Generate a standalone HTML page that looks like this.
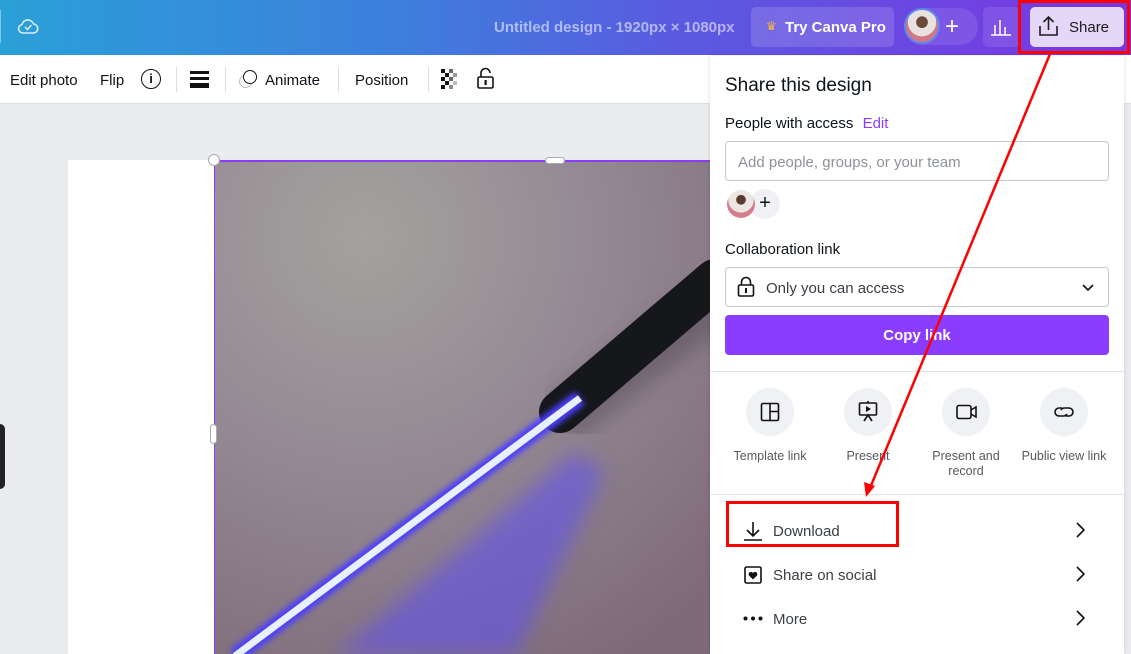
<!DOCTYPE html>
<html><head><meta charset="utf-8"><style>
*{box-sizing:border-box;margin:0;padding:0}
body{width:1131px;height:654px;overflow:hidden;position:relative;font-family:"Liberation Sans",sans-serif;background:#ebecf0;color:#0e1318}
.top{position:absolute;left:0;top:0;width:1131px;height:55px;background:linear-gradient(90deg,#2aa0d8 0%,#3d7fdc 35%,#5a5ae0 60%,#7b35e3 100%)}
.tb{position:absolute;left:0;top:55px;width:1131px;height:49px;background:#fff;border-bottom:1px solid #dcdde2}
.tb span{position:absolute;top:17px;font-size:15px;color:#0e1318}
.sep{position:absolute;top:12px;width:1px;height:25px;background:#dcdde2}
.abs{position:absolute}
.panel{position:absolute;left:710px;top:56px;width:414px;height:598px;background:#fff;box-shadow:0 0 4px rgba(0,0,0,.15)}
.panel .t{position:absolute;font-size:15px;color:#0e1318}
.circ{position:absolute;width:48px;height:48px;border-radius:50%;background:#f0f1f4}
.lab{position:absolute;font-size:12.5px;color:#555a60;text-align:center;width:100px;line-height:15px}
.row{position:absolute;left:0;width:414px;height:44px}
.row span{position:absolute;left:63px;top:14px;font-size:15px;color:#3a3f45}
.chev{position:absolute;left:365px;top:13px}
</style></head><body>
<div class="top">
 <div class="abs" style="left:0;top:10px;width:1px;height:33px;background:rgba(255,255,255,.4)"></div>
 <svg class="abs" style="left:17px;top:16px" width="22" height="20" viewBox="0 0 22 20"><path d="M6 17h10a4.5 4.5 0 0 0 .5-9A6 6 0 0 0 5 8.5 4.3 4.3 0 0 0 6 17z" fill="none" stroke="#d8ecf8" stroke-width="1.6"/><path d="M8 11l2.5 2.5L14.5 9" fill="none" stroke="#d8ecf8" stroke-width="1.6"/></svg>
 <div class="abs" style="left:494px;top:19px;font-size:15px;font-weight:bold;color:rgba(255,255,255,.55)">Untitled design - 1920px × 1080px</div>
 <div class="abs" style="left:751px;top:7px;width:143px;height:40px;border-radius:5px;background:rgba(255,255,255,.14)"></div>
 <div class="abs" style="left:766px;top:19px;font-size:12px;color:#f5b83d">♛</div>
 <div class="abs" style="left:785px;top:19px;font-size:15px;font-weight:bold;color:#fff">Try Canva Pro</div>
 <div class="abs" style="left:904px;top:8px;width:74px;height:37px;border-radius:19px;background:rgba(255,255,255,.1)"></div>
 <div class="abs" style="left:904px;top:8px;width:36px;height:36px;border-radius:50%;background:radial-gradient(circle at 50% 38%,#6b4a3a 0 22%,#e8e2de 24% 55%,#d07888 56%);border:2px solid #5d8af0"></div>
 <div class="abs" style="left:945px;top:13px;font-size:24px;color:#fff">+</div>
 <div class="abs" style="left:983px;top:7px;width:37px;height:40px;border-radius:5px;background:rgba(255,255,255,.1)"></div>
 <svg class="abs" style="left:990px;top:17px" width="22" height="20"><path d="M1 18h20M5 18V8M10 18V3M15 18V10" stroke="#fff" stroke-width="1.5" fill="none"/></svg>
 <div class="abs" style="left:1030px;top:7px;width:94px;height:40px;border-radius:5px;background:#e4d7f7"></div>
 <svg class="abs" style="left:1038px;top:15px" width="22" height="22"><path d="M2 11v9h17v-9M10.5 15V2M5.5 7l5-5 5 5" stroke="#1a1d21" stroke-width="1.6" fill="none"/></svg>
 <div class="abs" style="left:1069px;top:19px;font-size:15px;color:#1a1d21">Share</div>
 <div class="abs" style="left:1018px;top:0;width:112px;height:54px;border:3px solid #f00"></div>
</div>
<div class="tb">
 <span style="left:10px">Edit photo</span><span style="left:100px">Flip</span>
 <div class="abs" style="left:141px;top:14px;width:20px;height:20px;border:1.6px solid #111;border-radius:50%;font-size:13px;font-weight:bold;text-align:center;line-height:17px">i</div>
 <div class="sep" style="left:176px"></div>
 <div class="abs" style="left:190px;top:16px;width:19px;height:3px;background:#111"></div>
 <div class="abs" style="left:190px;top:22px;width:19px;height:3px;background:#111"></div>
 <div class="abs" style="left:190px;top:28px;width:19px;height:5px;background:#111"></div>
 <div class="sep" style="left:225px"></div>
 <div class="abs" style="left:239px;top:20px;width:13px;height:13px;border:1.5px solid #bbb;border-radius:50%"></div>
 <div class="abs" style="left:243px;top:15px;width:14px;height:14px;border:1.6px solid #111;border-radius:50%;background:#fff"></div>
 <span style="left:265px">Animate</span>
 <div class="sep" style="left:338px"></div>
 <span style="left:355px">Position</span>
 <div class="sep" style="left:428px"></div>
 <svg class="abs" style="left:441px;top:14px" width="20" height="20"><g fill="#111"><rect x="0" y="0" width="4" height="4"/><rect x="8" y="0" width="4" height="4" fill="#666"/><rect x="4" y="4" width="4" height="4"/><rect x="12" y="4" width="4" height="4" fill="#999"/><rect x="0" y="8" width="4" height="4"/><rect x="8" y="8" width="4" height="4" fill="#666"/><rect x="4" y="12" width="4" height="4"/><rect x="12" y="12" width="4" height="4" fill="#bbb"/><rect x="0" y="16" width="4" height="4"/><rect x="8" y="16" width="4" height="4" fill="#888"/></g></svg>
 <svg class="abs" style="left:476px;top:12px" width="20" height="24"><path d="M5 10V6a4.5 4.5 0 0 1 9 0" stroke="#111" stroke-width="1.6" fill="none"/><rect x="2" y="10" width="15" height="11" rx="1.5" stroke="#111" stroke-width="1.6" fill="none"/><rect x="8.5" y="13" width="2.2" height="5" fill="#111"/></svg>
</div>
<div class="abs" style="left:68px;top:160px;width:146px;height:494px;background:#fff"></div>
<svg class="abs" style="left:214px;top:160px;border-top:2px solid #8b3dff;border-left:1.5px solid #8b3dff" width="496" height="494">
 <defs>
  <radialGradient id="bg" cx="0.3" cy="0.15" r="1"><stop offset="0" stop-color="#a3a29e"/><stop offset="0.45" stop-color="#958a94"/><stop offset="1" stop-color="#7e6a78"/></radialGradient>
  <filter id="b8"><feGaussianBlur stdDeviation="10"/></filter>
  <filter id="b3"><feGaussianBlur stdDeviation="3"/></filter>
 </defs>
 <rect width="496" height="494" fill="url(#bg)"/>
 <path d="M360 290L120 494H300L390 310z" fill="#5a4cff" opacity=".5" filter="url(#b8)"/>
 <line x1="345" y1="260" x2="500" y2="140" stroke="#3a3040" stroke-width="50" opacity=".35" filter="url(#b8)"/>
 <line x1="345" y1="250" x2="500" y2="118" stroke="#16171b" stroke-width="42" stroke-linecap="round"/>
 <line x1="20" y1="494" x2="365" y2="236" stroke="#4a3cff" stroke-width="16" filter="url(#b3)"/>
 <line x1="20" y1="494" x2="365" y2="236" stroke="#e8f0ff" stroke-width="7"/>
</svg>
<div class="abs" style="left:208px;top:154px;width:12px;height:12px;border-radius:50%;background:#fff;border:1px solid #aaa"></div>
<div class="abs" style="left:545px;top:157px;width:20px;height:7px;border-radius:4px;background:#fff;border:1px solid #aaa"></div>
<div class="abs" style="left:210px;top:424px;width:7px;height:20px;border-radius:4px;background:#fff;border:1px solid #aaa"></div>
<div class="abs" style="left:-6px;top:424px;width:11px;height:65px;border-radius:5px;background:#222"></div>
<div class="panel">
 <div class="t" style="left:15px;top:19px;font-size:19px">Share this design</div>
 <div class="t" style="left:15px;top:59px">People with access <span style="color:#8b3dff;margin-left:5px">Edit</span></div>
 <div class="abs" style="left:15px;top:85px;width:384px;height:40px;border:1px solid #c4c7cc;border-radius:4px"></div>
 <div class="t" style="left:28px;top:98px;color:#8e9298">Add people, groups, or your team</div>
 <div class="abs" style="left:40px;top:133px;width:30px;height:30px;border-radius:50%;background:#f0f1f4;font-size:20px;text-align:center;line-height:28px">+</div>
 <div class="abs" style="left:17px;top:134px;width:28px;height:28px;border-radius:50%;background:radial-gradient(circle at 50% 35%,#5a3a2c 0 20%,#ece6e2 22% 55%,#d57d8c 56%)"></div>
 <div class="t" style="left:15px;top:185px">Collaboration link</div>
 <div class="abs" style="left:15px;top:211px;width:384px;height:40px;border:1px solid #c4c7cc;border-radius:4px"></div>
 <svg class="abs" style="left:27px;top:220px" width="18" height="22"><path d="M4.5 9V6a4.5 4.5 0 0 1 9 0v3" stroke="#111" stroke-width="1.6" fill="none"/><rect x="1.5" y="9" width="15" height="11" rx="1.5" stroke="#111" stroke-width="1.6" fill="none"/><rect x="8" y="12" width="2" height="5" fill="#111"/></svg>
 <div class="t" style="left:56px;top:224px;color:#3a3f45">Only you can access</div>
 <svg class="abs" style="left:372px;top:228px" width="12" height="8"><path d="M1 1l5 5 5-5" stroke="#111" stroke-width="1.6" fill="none"/></svg>
 <div class="abs" style="left:15px;top:259px;width:384px;height:40px;border-radius:4px;background:#8b3dff;color:#fff;font-weight:bold;font-size:15px;text-align:center;line-height:42px">Copy link</div>
 <div class="abs" style="left:0;top:315px;width:414px;height:1px;background:#e3e4e8"></div>
 <div class="circ" style="left:36px;top:332px"></div><div class="circ" style="left:134px;top:332px"></div><div class="circ" style="left:232px;top:332px"></div><div class="circ" style="left:330px;top:332px"></div>
 <svg class="abs" style="left:50px;top:346px" width="20" height="20"><rect x="1.5" y="1.5" width="17" height="17" rx="1.5" stroke="#111" stroke-width="1.6" fill="none"/><path d="M10 1.5v17M10 9.5h8.5" stroke="#111" stroke-width="1.6"/></svg>
 <svg class="abs" style="left:148px;top:345px" width="20" height="22"><rect x="1.5" y="2" width="17" height="12" rx="1" stroke="#111" stroke-width="1.6" fill="none"/><path d="M10 0v2M6 20l4-6 4 6" stroke="#111" stroke-width="1.6" fill="none"/><path d="M8 5v6l5-3z" fill="#111"/></svg>
 <svg class="abs" style="left:246px;top:348px" width="22" height="16"><rect x="1" y="1.5" width="14" height="13" rx="2" stroke="#111" stroke-width="1.6" fill="none"/><path d="M15 6l5-3v10l-5-3" stroke="#111" stroke-width="1.6" fill="none"/></svg>
 <svg class="abs" style="left:344px;top:348px" width="20" height="16"><path d="M8 4H5a4 4 0 0 0 0 8h5a4 4 0 0 0 3-2M12 12h3a4 4 0 0 0 0-8h-5a4 4 0 0 0-3 2" stroke="#111" stroke-width="1.6" fill="none"/></svg>
 <div class="lab" style="left:10px;top:393px">Template link</div>
 <div class="lab" style="left:108px;top:393px">Present</div>
 <div class="lab" style="left:206px;top:393px">Present and record</div>
 <div class="lab" style="left:304px;top:393px">Public view link</div>
 <div class="abs" style="left:0;top:438px;width:414px;height:1px;background:#e3e4e8"></div>
 <div class="row" style="top:453px"><svg class="abs" style="left:33px;top:12px" width="20" height="20"><path d="M10 1v14M4 9l6 6 6-6M1 19h18" stroke="#111" stroke-width="1.6" fill="none"/></svg><span>Download</span><svg class="chev" width="10" height="16"><path d="M2 1l7 7-7 7" stroke="#111" stroke-width="1.6" fill="none"/></svg></div>
 <div class="row" style="top:497px"><svg class="abs" style="left:34px;top:13px" width="18" height="18"><rect x="1" y="1" width="16" height="16" rx="1.5" stroke="#111" stroke-width="1.6" fill="none"/><path d="M9 13.5l-4-4a2 2 0 0 1 4-2.5 2 2 0 0 1 4 2.5z" fill="#111"/></svg><span>Share on social</span><svg class="chev" width="10" height="16"><path d="M2 1l7 7-7 7" stroke="#111" stroke-width="1.6" fill="none"/></svg></div>
 <div class="row" style="top:541px"><svg class="abs" style="left:33px;top:19px" width="20" height="5"><circle cx="2.5" cy="2.5" r="2" fill="#111"/><circle cx="10" cy="2.5" r="2" fill="#111"/><circle cx="17.5" cy="2.5" r="2" fill="#111"/></svg><span>More</span><svg class="chev" width="10" height="16"><path d="M2 1l7 7-7 7" stroke="#111" stroke-width="1.6" fill="none"/></svg></div>
 <div class="abs" style="left:16px;top:445px;width:173px;height:46px;border:3px solid #f00"></div>
</div>
<svg class="abs" style="left:0;top:0" width="1131" height="654"><path d="M1050 54L870 488" stroke="#f00" stroke-width="2.5"/><path d="M866 497l-2-15 11 4z" fill="#f00"/></svg>
</body></html>
